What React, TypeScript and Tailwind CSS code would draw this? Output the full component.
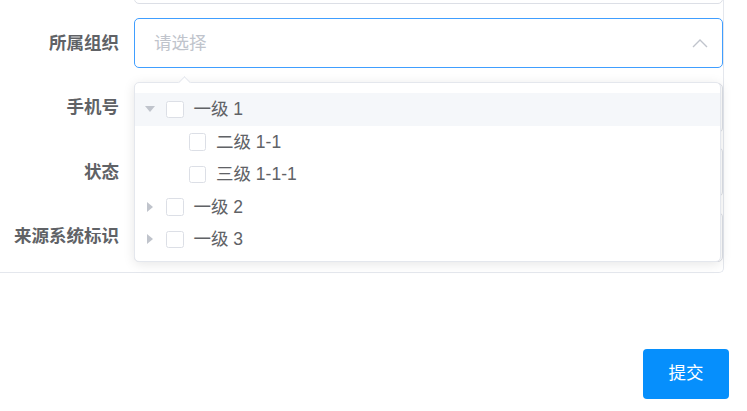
import React from "react";

const FONT = { fontFamily: '"Liberation Sans", "Noto Sans CJK SC", sans-serif' };

type Node = { label: string; level: number; caret: "down" | "right" | "none"; active?: boolean };

const nodes: Node[] = [
  { label: "一级 1", level: 0, caret: "down", active: true },
  { label: "二级 1-1", level: 1, caret: "none" },
  { label: "三级 1-1-1", level: 1, caret: "none" },
  { label: "一级 2", level: 0, caret: "right" },
  { label: "一级 3", level: 0, caret: "right" },
];

const Caret: React.FC<{ dir: Node["caret"] }> = ({ dir }) => (
  <span className="flex h-full w-[30px] shrink-0 items-center justify-center">
    {dir === "down" && (
      <svg width="10" height="6" viewBox="0 0 10 6">
        <path d="M0 0 L10 0 L5 6 Z" fill="#c0c4cc" />
      </svg>
    )}
    {dir === "right" && (
      <svg width="6" height="10" viewBox="0 0 6 10">
        <path d="M0 0 L6 5 L0 10 Z" fill="#c0c4cc" />
      </svg>
    )}
  </span>
);

const FormItem: React.FC<{ label?: string; children: React.ReactNode; className?: string }> = ({
  label,
  children,
  className = "",
}) => (
  <div className={`flex h-[50px] items-center ${className}`}>
    <label className="w-[134px] shrink-0 pr-[15px] text-right text-[17.5px] font-bold text-[#606266]">
      {label}
    </label>
    {children}
  </div>
);

const PlainInput = () => (
  <div className="h-[50px] w-[589px] rounded-[5px] border border-[#dcdfe6] bg-white" />
);

const App: React.FC = () => {
  return (
    <div className="relative h-[411px] w-[747px] overflow-hidden bg-white" style={FONT}>
      <div className="relative w-[724px] rounded-br-[5px] border-r border-b border-[#e4e7ed] pb-[10px]">
        <div className="flex flex-col gap-[14.5px]">
          <FormItem className="-mt-[46.5px]">
            <PlainInput />
          </FormItem>
          <FormItem label="所属组织">
            <div className="flex h-[50px] w-[589px] items-center justify-between rounded-[5px] border border-[#409eff] bg-white pl-[19px] pr-[14px]">
              <span className="text-[17.5px] text-[#c0c4cc]">请选择</span>
              <svg width="16" height="10" viewBox="0 0 16 10">
                <path d="M1 9 L8 2 L15 9" fill="none" stroke="#c0c4cc" strokeWidth="1.4" />
              </svg>
            </div>
          </FormItem>
          <FormItem label="手机号">
            <PlainInput />
          </FormItem>
          <FormItem label="状态">
            <PlainInput />
          </FormItem>
          <FormItem label="来源系统标识">
            <PlainInput />
          </FormItem>
        </div>

        {/* tree select dropdown */}
        <div className="absolute left-[134px] top-[82px] h-[180px] w-[587px] rounded-[5px] border border-[#e4e7ed] bg-white pt-[10px] shadow-[0_2px_12px_rgba(0,0,0,0.1)]">
          <div className="absolute -top-[5px] left-[45px] h-[9px] w-[9px] rotate-45 border-t border-l border-[#e4e7ed] bg-white" />
          {nodes.map((n) => (
            <div
              key={n.label}
              className={`flex h-[32.5px] items-center ${n.active ? "bg-[#f5f7fa]" : ""}`}
              style={{ paddingLeft: n.level * 22.5 }}
            >
              <Caret dir={n.caret} />
              <span className="ml-[1px] mr-[10px] h-[17.5px] w-[17.5px] shrink-0 rounded-[2.5px] border border-[#dcdfe6] bg-white" />
              <span className="text-[17.5px] text-[#606266]">{n.label}</span>
            </div>
          ))}
        </div>
      </div>

      <div className="mt-[76px] flex justify-end pr-[18px]">
        <button className="h-[50px] w-[86px] rounded-[4px] bg-[#068ffc] text-[17.5px] text-white">
          提交
        </button>
      </div>
    </div>
  );
};

export default App;
